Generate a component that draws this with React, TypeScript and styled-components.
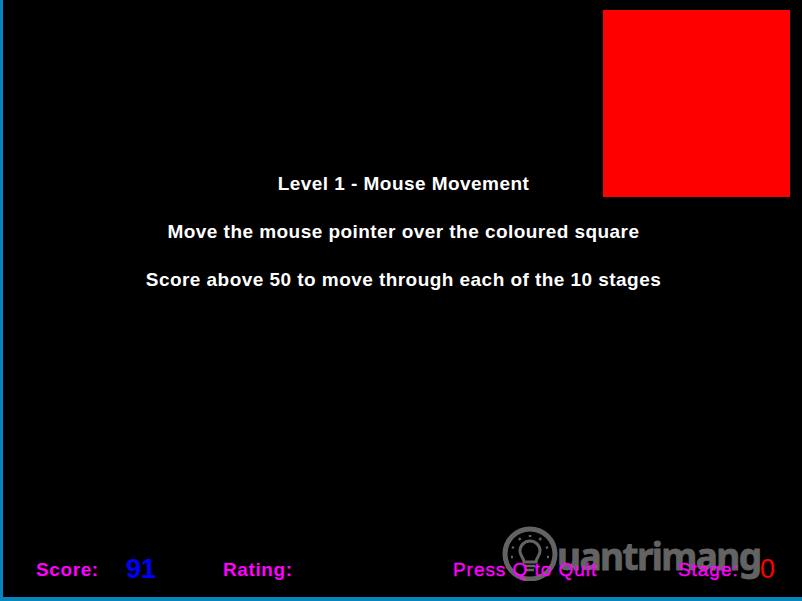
import React from 'react';
import styled, { createGlobalStyle } from 'styled-components';

const GlobalStyle = createGlobalStyle`
  html, body {
    margin: 0;
    padding: 0;
    background: #000;
  }
`;

const Window = styled.div`
  position: relative;
  box-sizing: border-box;
  width: 802px;
  height: 601px;
  overflow: hidden;
  background: #000;
  border-left: 3px solid #0a84c1;
  border-bottom: 4px solid #0a84c1;
  display: flex;
  flex-direction: column;
  font-family: 'Liberation Sans', Arial, sans-serif;
`;

const Target = styled.div`
  position: absolute;
  left: 600px;
  top: 10px;
  width: 187px;
  height: 187px;
  background: #ff0000;
`;

const Instructions = styled.div`
  flex: 1;
  padding-top: 173px;
  display: flex;
  flex-direction: column;
  align-items: center;
  gap: 26px;
  box-sizing: border-box;
`;

const Line = styled.div`
  color: #fff;
  font-size: 19px;
  font-weight: 700;
  line-height: 22px;
  letter-spacing: 0.45px;
  white-space: nowrap;
  padding-left: 2px;
`;

const Footer = styled.div`
  position: relative;
  height: 26px;
  margin-bottom: 14px;
  padding-left: 33px;
  display: grid;
  grid-template-columns: 90px 97px 230px 225px 82px auto;
  align-items: center;
`;

const Label = styled.span<{ $bold?: boolean }>`
  position: relative;
  z-index: 1;
  color: #ff00ff;
  font-size: 19px;
  font-weight: ${p => (p.$bold ? 700 : 400)};
  letter-spacing: ${p => (p.$bold ? '0.6px' : '0.95px')};
  -webkit-text-stroke: ${p => (p.$bold ? '0' : '0.35px')};
  white-space: nowrap;
`;

const Value = styled.span<{ $color: string }>`
  position: relative;
  z-index: 1;
  color: ${p => p.$color};
  font-size: 27px;
  font-weight: ${p => (p.$color === '#0000ff' ? 700 : 400)};
  line-height: 26px;
  margin-top: -2px;
`;

const Watermark = styled.div`
  position: absolute;
  left: 498px;
  top: 522px;
  display: flex;
  align-items: center;
  color: #636363;
  font-family: 'Noto Sans', sans-serif;
  font-size: 37px;
  font-weight: 700;
  letter-spacing: -1.6px;
  -webkit-text-stroke: 0.8px #636363;
`;

const WatermarkText = styled.span`
  margin-left: -2px;
  margin-top: 8px;
`;

const BulbLogo = () => (
  <svg width="58" height="58" viewBox="0 0 58 58" fill="none" stroke="#636363">
    <circle cx="29" cy="31" r="25" strokeWidth="5" />
    <path
      d="M23 39c0-4-4-6-4-11a10 10 0 0 1 20 0c0 5-4 7-4 11z"
      strokeWidth="3"
    />
    <path d="M24 43h10M25 47h8" strokeWidth="2.500" />
    <path
      d="M29 12v2M18 15l1.500 2M40 15l-1.500 2M11 24l2 1M47 24l-2 1M10 34h2M48 34h-2"
      strokeWidth="2.500"
    />
  </svg>
);

export default function App() {
  return (
    <>
      <GlobalStyle />
      <Window>
        <Target />
        <Instructions>
          <Line>Level 1 - Mouse Movement</Line>
          <Line>Move the mouse pointer over the coloured square</Line>
          <Line>Score above 50 to move through each of the 10 stages</Line>
        </Instructions>
        <Watermark>
          <BulbLogo />
          <WatermarkText>uantrimang</WatermarkText>
        </Watermark>
        <Footer>
          <Label $bold>Score:</Label>
          <Value $color="#0000ff">91</Value>
          <Label $bold>Rating:</Label>
          <Label>Press Q to Quit</Label>
          <Label>Stage:</Label>
          <Value $color="#ff0000">0</Value>
        </Footer>
      </Window>
    </>
  );
}
